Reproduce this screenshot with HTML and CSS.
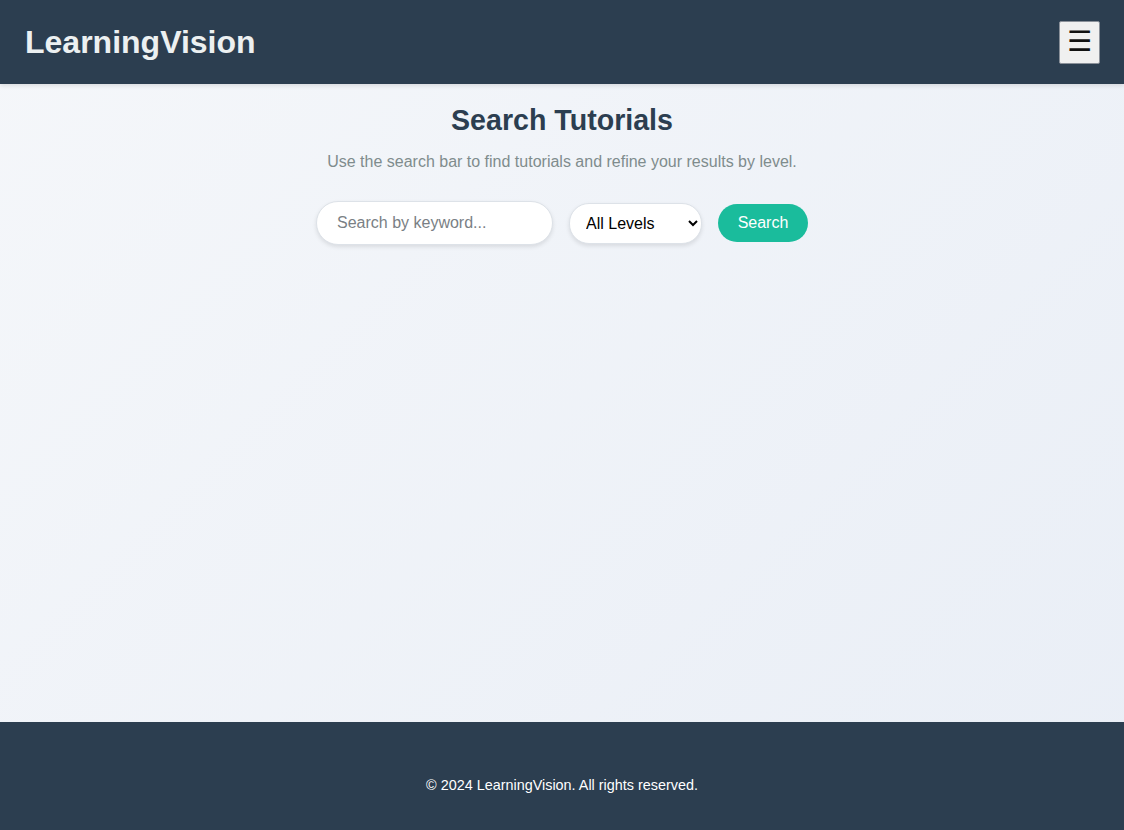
FILE: index.html
```html
<!DOCTYPE html>
<html lang="en">
<head>
<meta charset="utf-8">
<title>LearningVision</title>
<link rel="stylesheet" href="styles.css">
</head>
<body>
<header class="site-header">
  <div class="logo">LearningVision</div>
  <button class="menu-btn" aria-label="Menu">☰</button>
</header>
<main class="content">
  <h1 class="title">Search Tutorials</h1>
  <p class="subtitle">Use the search bar to find tutorials and refine your results by level.</p>
  <form class="search-form">
    <input class="search-input" type="text" placeholder="Search by keyword...">
    <select class="level-select">
      <option>All Levels</option>
      <option>Beginner</option>
      <option>Intermediate</option>
      <option>Advanced</option>
    </select>
    <button class="search-btn" type="button">Search</button>
  </form>
</main>
<footer class="site-footer">
  <p>© 2024 LearningVision. All rights reserved.</p>
</footer>
</body>
</html>
```
FILE: styles.css
```css
* { box-sizing: border-box; }
html, body { height: 100%; }
body {
  margin: 0;
  font-family: "Liberation Sans", Arial, sans-serif;
  display: flex;
  flex-direction: column;
  min-height: 100vh;
  background: linear-gradient(135deg, #f5f7fa 0%, #e9eef6 100%);
}
.site-header {
  height: 84px;
  background: #2c3e50;
  display: flex;
  align-items: center;
  justify-content: space-between;
  padding: 0 24px 0 25px;
  box-shadow: 0 2px 4px rgba(0,0,0,0.1);
}
.logo {
  color: #ecf0f1;
  font-size: 32px;
  font-weight: bold;
}
.menu-btn {
  width: 41px;
  height: 43px;
  background: #f0f0f0;
  border: 1px solid #8a9099;
  border-radius: 2px;
  font-size: 28px;
  line-height: 1;
  padding: 0;
  color: #111;
  font-family: "DejaVu Sans", sans-serif;
  cursor: pointer;
}
.content {
  flex: 1;
  display: flex;
  flex-direction: column;
  align-items: center;
  padding-top: 19px;
}
.title {
  margin: 0;
  font-size: 28.6px;
  color: #2c3e50;
  font-weight: bold;
  line-height: 34px;
}
.subtitle {
  margin: 16px 0 0;
  color: #7f8c8d;
  font-size: 16px;
}
.search-form {
  margin-top: 30px;
  display: flex;
  align-items: center;
  gap: 16px;
}
.search-input {
  width: 237px;
  height: 44px;
  border: 1px solid #dde2e8;
  border-radius: 22px;
  padding: 0 20px;
  font-size: 16px;
  font-family: "Liberation Sans", Arial, sans-serif;
  background: #fff;
  box-shadow: 0 2px 4px rgba(0,0,0,0.1);
  outline: none;
}
.search-input::placeholder { color: #7a7f85; }
.level-select {
  width: 133px;
  height: 41px;
  border: 1px solid #dde2e8;
  border-radius: 20px;
  padding: 0 10px 0 12px;
  font-size: 16px;
  font-family: "Liberation Sans", Arial, sans-serif;
  background: #fff;
  color: #000;
  box-shadow: 0 2px 4px rgba(0,0,0,0.1);
}
.search-btn {
  width: 90px;
  height: 38px;
  border: none;
  border-radius: 19px;
  background: #1abc9c;
  color: #fff;
  font-size: 16px;
  font-family: "Liberation Sans", Arial, sans-serif;
  cursor: pointer;
}
.site-footer {
  height: 108px;
  background: #2c3e50;
  color: #fff;
  text-align: center;
  padding-top: 55px;
  font-size: 14.4px;
}
.site-footer p { margin: 0; }
```
